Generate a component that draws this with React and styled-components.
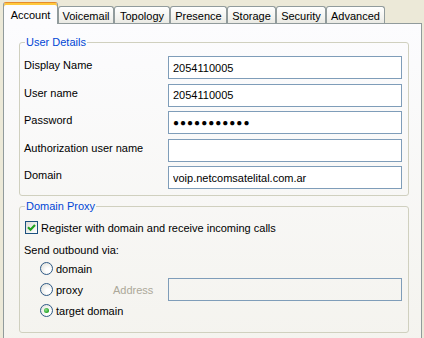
// Dependencies
import React from 'react'
import styled, { createGlobalStyle } from 'styled-components'

// Swatches
const xpBeige = '#ECE9D8'
const tabBorder = '#919B9C'
const groupBorder = '#D0D0BF'
const groupTitle = '#0046D5'
const fieldBorder = '#7F9DB9'
const controlBorder = '#1C5180'
const checkGreen = '#21A121'

const GlobalStyle = createGlobalStyle`
  html, body {
    margin: 0;
    background: ${xpBeige};
  }
  body {
    font-family: "Liberation Sans", Arial, sans-serif;
    font-size: 11px;
    color: #000;
  }
`

// Styled Components
const Page = styled.div`
  width: 424px;
  height: 338px;
  box-sizing: border-box;
  padding: 2px 2px 0 3px;
  overflow: hidden;
`

const TabStrip = styled.div`
  display: flex;
  align-items: flex-end;
  height: 21px;
`

const Tab = styled.div`
  box-sizing: border-box;
  width: ${p => p.$width}px;
  height: ${p => (p.$active ? 22 : 17)}px;
  margin-bottom: ${p => (p.$active ? -1 : 0)}px;
  position: relative;
  z-index: ${p => (p.$active ? 1 : 0)};
  display: flex;
  align-items: center;
  justify-content: center;
  padding-top: ${p => (p.$active ? 2 : 1)}px;
  border: 1px solid ${tabBorder};
  border-bottom: none;
  border-radius: 3px 3px 0 0;
  white-space: nowrap;
  background: ${p =>
    p.$active ? '#FCFCFE' : 'linear-gradient(to bottom, #FFFFFF, #F2F2EE 70%, #E9E9E3)'};
  ${p =>
    p.$active &&
    `
    border-top: 1px solid #E68B2C;
    box-shadow: inset 0 2px 0 #FFC83C;
  `}
`

const Panel = styled.div`
  height: 330px;
  box-sizing: border-box;
  border: 1px solid ${tabBorder};
  border-bottom: none;
  background: linear-gradient(to bottom, #FCFCFE, #F4F3EE);
  padding: 12px 12px 0 15px;
`

const Group = styled.fieldset`
  margin: ${p => p.$top || 0}px 0 0 0;
  padding: 7px 6px ${p => p.$bottom}px 4px;
  border: 1px solid ${groupBorder};
  border-radius: 3px;
  min-width: 0;

  legend {
    color: ${groupTitle};
    line-height: 13px;
    padding: 0 1px;
    margin-left: 1px;
  }
`

const FieldGrid = styled.div`
  display: grid;
  grid-template-columns: 144px 234px;
  grid-auto-rows: 23px;
  row-gap: 4.5px;
  align-items: center;
`

const Label = styled.label`
  padding-bottom: 5px;
`

const Input = styled.input`
  box-sizing: border-box;
  width: 234px;
  height: 23px;
  margin: 0;
  padding: 0 4px;
  border: 1px solid ${fieldBorder};
  background: ${p => (p.$disabled ? 'transparent' : '#fff')};
  font-family: "Liberation Sans", Arial, sans-serif;
  font-size: ${p => (p.$dots ? 10 : 11)}px;
  letter-spacing: ${p => (p.$dots ? 1 : 0)}px;
  color: #000;
  outline: none;
`

const CheckRow = styled.div`
  display: flex;
  align-items: center;
  gap: 3px;
  height: 15px;
  padding-left: 1px;
`

const Box = styled.span`
  box-sizing: border-box;
  width: 13px;
  height: 13px;
  border: 1px solid ${controlBorder};
  background: linear-gradient(135deg, #DCDCD7, #FFFFFF);
  display: flex;
  align-items: center;
  justify-content: center;
`

const Caption = styled.div`
  height: 15px;
  line-height: 15px;
  margin-top: 8px;
`

const RadioList = styled.div`
  display: flex;
  flex-direction: column;
  padding-left: 16px;
`

const RadioRow = styled.div`
  display: flex;
  align-items: center;
  height: 21px;
`

const Option = styled.div`
  display: flex;
  align-items: center;
  gap: 3px;
  width: ${p => (p.$width ? `${p.$width}px` : 'auto')};
`

const Radio = styled.span`
  box-sizing: border-box;
  width: 13px;
  height: 13px;
  border-radius: 50%;
  border: 1px solid #2F5A86;
  background: radial-gradient(circle at 65% 65%, #FFFFFF 20%, #DCDCD4 100%);
  display: flex;
  align-items: center;
  justify-content: center;

  &::after {
    content: '';
    display: ${p => (p.$checked ? 'block' : 'none')};
    width: 5px;
    height: 5px;
    border-radius: 50%;
    background: radial-gradient(circle at 40% 40%, #8FE08F, ${checkGreen} 70%);
  }
`

const AddressLabel = styled.span`
  width: 55px;
  color: #ACA899;
`

const tabs = [
  { name: 'Account', width: 55, active: true },
  { name: 'Voicemail', width: 56 },
  { name: 'Topology', width: 56 },
  { name: 'Presence', width: 57 },
  { name: 'Storage', width: 49 },
  { name: 'Security', width: 50 },
  { name: 'Advanced', width: 59 },
]

const details = [
  { label: 'Display Name', value: '2054110005' },
  { label: 'User name', value: '2054110005' },
  { label: 'Password', value: '●●●●●●●●●●●', dots: true },
  { label: 'Authorization user name', value: '' },
  { label: 'Domain', value: 'voip.netcomsatelital.com.ar' },
]

const App = () => (
  <Page>
    <GlobalStyle />

    <TabStrip>
      {tabs.map(t => (
        <Tab key={t.name} $width={t.width} $active={t.active}>
          {t.name}
        </Tab>
      ))}
    </TabStrip>

    <Panel>
      <Group $bottom={6}>
        <legend>User Details</legend>
        <FieldGrid>
          {details.map(d => (
            <React.Fragment key={d.label}>
              <Label>{d.label}</Label>
              <Input readOnly value={d.value} $dots={d.dots} />
            </React.Fragment>
          ))}
        </FieldGrid>
      </Group>

      <Group $top={4} $bottom={11}>
        <legend>Domain Proxy</legend>
        <CheckRow>
          <Box>
            <svg width="9" height="9" viewBox="0 0 9 9">
              <path d="M1 4.2 L3.5 6.7 L8 2" fill="none" stroke={checkGreen} strokeWidth="2.2" />
            </svg>
          </Box>
          Register with domain and receive incoming calls
        </CheckRow>

        <Caption>Send outbound via:</Caption>

        <RadioList>
          <RadioRow>
            <Option>
              <Radio />
              domain
            </Option>
          </RadioRow>
          <RadioRow>
            <Option $width={73}>
              <Radio />
              proxy
            </Option>
            <AddressLabel>Address</AddressLabel>
            <Input readOnly value="" $disabled />
          </RadioRow>
          <RadioRow>
            <Option>
              <Radio $checked />
              target domain
            </Option>
          </RadioRow>
        </RadioList>
      </Group>
    </Panel>
  </Page>
)

export default App
